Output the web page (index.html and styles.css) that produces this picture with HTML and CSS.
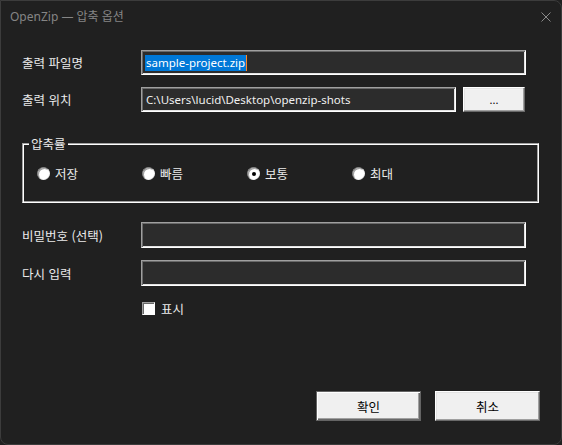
FILE: index.html
```html
<!DOCTYPE html>
<html lang="ko">
<head>
<meta charset="utf-8">
<title>OpenZip — 압축 옵션</title>
<link rel="stylesheet" href="styles.css">
</head>
<body>
<div class="window">
  <div class="titlebar">
    <span class="title">OpenZip — 압축 옵션</span>
    <svg class="close" width="10" height="10" viewBox="0 0 10 10" aria-hidden="true">
      <path d="M0.5 0.5 L9.5 9.5 M9.5 0.5 L0.5 9.5" stroke="#8a8a8a" stroke-width="1" fill="none"/>
    </svg>
  </div>
  <div class="content">
    <div class="row row-short">
      <span class="label">출력 파일명</span>
      <div class="field"><span class="sel">sample-project.zip</span><span class="caret"></span></div>
    </div>
    <div class="row row-short row-gap">
      <span class="label">출력 위치</span>
      <div class="field field-path">C:\Users\lucid\Desktop\openzip-shots</div>
      <button class="btn btn-browse">...</button>
    </div>
    <div class="group">
      <span class="legend">압축률</span>
      <div class="radios">
        <div class="radio-item"><span class="radio"></span><span class="radio-text">저장</span></div>
        <div class="radio-item"><span class="radio"></span><span class="radio-text">빠름</span></div>
        <div class="radio-item"><span class="radio checked"></span><span class="radio-text">보통</span></div>
        <div class="radio-item"><span class="radio"></span><span class="radio-text">최대</span></div>
      </div>
    </div>
    <div class="row row-tall row-after-group">
      <span class="label">비밀번호 (선택)</span>
      <div class="field"></div>
    </div>
    <div class="row row-tall row-gap">
      <span class="label">다시 입력</span>
      <div class="field"></div>
    </div>
    <div class="check-row">
      <span class="checkbox"></span><span class="check-text">표시</span>
    </div>
    <div class="buttons">
      <button class="btn btn-default">확인</button>
      <button class="btn">취소</button>
    </div>
  </div>
</div>
</body>
</html>
```

FILE: styles.css
```css
* { box-sizing: border-box; }

html, body {
  margin: 0;
  padding: 0;
  background: #202020;
}

body {
  font-family: "Noto Sans CJK KR", "Noto Sans", sans-serif;
  font-size: 12.5px;
  color: #ebebeb;
}

.window {
  width: 562px;
  height: 445px;
  background: #202020;
  border: 1px solid #3c3c3c;
  border-radius: 0 8px 8px 8px;
  display: flex;
  flex-direction: column;
  overflow: hidden;
}

.titlebar {
  height: 31px;
  flex: none;
  display: flex;
  align-items: center;
  justify-content: space-between;
  padding: 0 10px 0 9px;
}

.title {
  font-family: "Noto Sans", "Noto Sans CJK KR", sans-serif;
  font-size: 12px;
  color: #858585;
  line-height: 14px;
}

.close { display: block; }

.content {
  flex: 1;
  display: flex;
  flex-direction: column;
  padding: 18px 35px 23px 21px;
}

.row {
  display: flex;
  align-items: center;
}

.row-short { height: 25px; }
.row-tall { height: 26px; }
.row-gap { margin-top: 12px; }
.row-after-group { margin-top: 19px; }

.label {
  width: 119px;
  flex: none;
  line-height: 15px;
  color: #ebebeb;
}

.field {
  flex: 1;
  height: 100%;
  background: #2c2c2c;
  border: 1px solid;
  border-color: #a0a0a0 #ffffff #ffffff #a0a0a0;
  box-shadow: inset 1px 1px 0 #696969, inset -1px -1px 0 #e3e3e3;
  display: flex;
  align-items: center;
  padding-left: 3px;
  font-family: "Noto Sans", sans-serif;
  font-size: 11.5px;
  color: #f0f0f0;
  white-space: nowrap;
  overflow: hidden;
}

.field-path {
  flex: none;
  width: 315px;
  padding-left: 4px;
}

.sel {
  background: #0078d7;
  color: #ffffff;
  line-height: 16px;
  padding: 0 1px;
}

.caret {
  width: 1px;
  height: 16px;
  background: #ff8728;
}

.btn {
  font-family: "Noto Sans CJK KR", "Noto Sans", sans-serif;
  font-size: 12.5px;
  color: #000000;
  background: #f0f0f0;
  border: 1px solid;
  border-color: #ffffff #696969 #696969 #ffffff;
  box-shadow: inset -1px -1px 0 #a0a0a0, inset 1px 1px 0 #e3e3e3;
  padding: 0;
  margin: 0;
  line-height: 15px;
}

.btn-browse {
  width: 62px;
  height: 25px;
  margin-left: 7px;
  font-family: "Noto Sans", sans-serif;
  font-size: 11px;
}

.group {
  position: relative;
  margin-top: 31px;
  margin-right: -13px;
  height: 60px;
  border: 1px solid;
  border-color: #a0a0a0 #ffffff #ffffff #a0a0a0;
  box-shadow: inset 1px 1px 0 #ffffff, inset -1px -1px 0 #a0a0a0;
  display: flex;
  align-items: center;
  padding-left: 14px;
}

.legend {
  position: absolute;
  top: -8px;
  left: 6px;
  padding: 0 2px;
  background: #202020;
  line-height: 15px;
  color: #ebebeb;
}

.radios {
  display: flex;
  margin-top: 1px;
}

.radio-item {
  width: 105px;
  display: flex;
  align-items: center;
  gap: 5px;
}

.radio {
  width: 13px;
  height: 13px;
  border-radius: 50%;
  background: #ffffff;
  border: 1px solid;
  border-color: #808080 #f0f0f0 #f0f0f0 #808080;
  box-shadow: inset 1px 1px 0 #a0a0a0;
  display: flex;
  align-items: center;
  justify-content: center;
}

.radio.checked::after {
  content: "";
  width: 4px;
  height: 4px;
  border-radius: 50%;
  background: #000000;
}

.radio-text {
  line-height: 15px;
}

.check-row {
  margin-top: 16px;
  padding-left: 120px;
  display: flex;
  align-items: center;
  gap: 6px;
  height: 13px;
}

.checkbox {
  width: 13px;
  height: 13px;
  background: #ffffff;
  border: 1px solid;
  border-color: #a0a0a0 #ffffff #ffffff #a0a0a0;
  box-shadow: inset 1px 1px 0 #696969;
}

.check-text { line-height: 15px; }

.buttons {
  margin-top: auto;
  margin-right: -14px;
  display: flex;
  justify-content: flex-end;
  gap: 14px;
}

.buttons .btn {
  width: 105px;
  height: 30px;
}

.btn-default {
  border: 1px solid #646464;
  box-shadow: inset 1px 1px 0 #ffffff, inset -1px -1px 0 #696969, inset -2px -2px 0 #a0a0a0;
}
```
